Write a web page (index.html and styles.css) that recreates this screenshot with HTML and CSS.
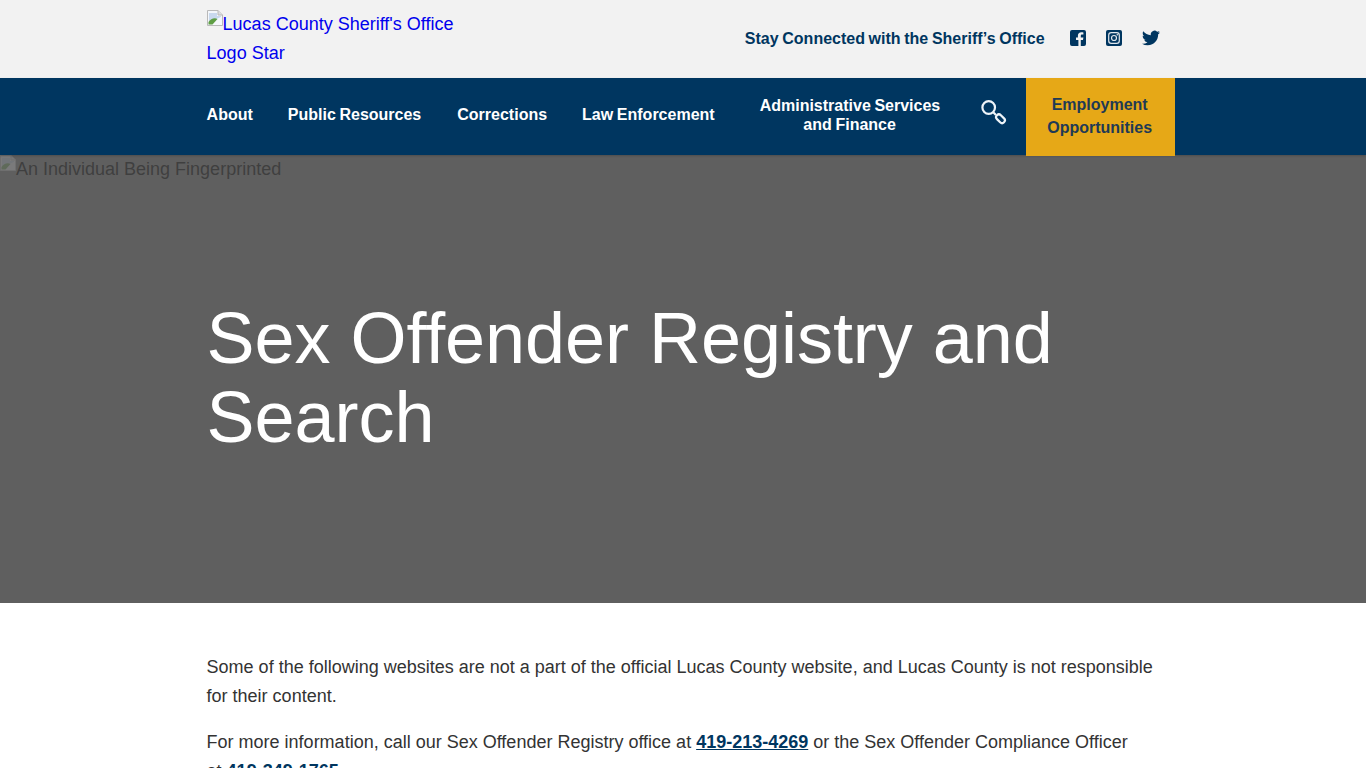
FILE: index.html
```html
<!DOCTYPE html>
<html lang="en">
<head>
<meta charset="utf-8">
<title>Sex Offender Registry and Search</title>
<link rel="stylesheet" href="styles.css">
</head>
<body>
<header class="topbar">
  <div class="wrap topbar-inner">
    <a class="logo" href="#">
      <svg class="broken" viewBox="0 0 16 16" width="16" height="16"><path d="M.5.5h10.500l4.500 4.500v10.500H.5z" fill="#f4f7fb" stroke="#b9b9b9"/><path d="M11 .5v4.500h4.500" fill="#dedede" stroke="#b9b9b9"/><path d="M2 3h8v3h4v1L2 12z" fill="#c9d9ee"/><path d="M1.500 14.500V12c2-3 6-5 9-3l-5 5.500z" fill="#5f9e45"/><path d="M6 15l8-8v8z" fill="#f4f7fb"/></svg>Lucas County Sheriff's Office Logo Star
    </a>
    <div class="social">
      <span class="social-label">Stay Connected with the Sheriff’s Office</span>
      <a class="social-icon" href="#" aria-label="Facebook"><svg viewBox="0 0 16 16" width="16" height="16"><path fill="#003660" d="M2 0h12a2 2 0 0 1 2 2v12a2 2 0 0 1-2 2h-3.200v-6h2.200l.4-2.600h-2.600V5.900c0-.8.4-1.300 1.400-1.300h1.200V2.400c-.7-.1-1.400-.2-2-.2-2.200 0-3.500 1.300-3.500 3.500v1.700H6v2.600h2.400v6H2a2 2 0 0 1-2-2V2a2 2 0 0 1 2-2z"/></svg></a>
      <a class="social-icon" href="#" aria-label="Instagram"><svg viewBox="0 0 16 16" width="16" height="16"><rect width="16" height="16" rx="2" fill="#003660"/><rect x="2.700" y="2.700" width="10.600" height="10.600" rx="2.600" fill="none" stroke="#dfe6ec" stroke-width="1.200"/><circle cx="8" cy="8" r="2.500" fill="none" stroke="#dfe6ec" stroke-width="1.200"/><circle cx="11.300" cy="4.700" r=".8" fill="#dfe6ec"/></svg></a>
      <a class="social-icon" href="#" aria-label="Twitter"><svg viewBox="0 0 24 24" width="18" height="18"><path fill="#003660" d="M23.950 4.570a10 10 0 0 1-2.820.77 4.960 4.960 0 0 0 2.160-2.720c-.95.550-2 .96-3.130 1.190a4.920 4.920 0 0 0-8.380 4.480C7.690 8.100 4.070 6.130 1.640 3.160a4.820 4.820 0 0 0-.67 2.480c0 1.710.87 3.210 2.190 4.090a4.900 4.900 0 0 1-2.230-.62v.06a4.920 4.920 0 0 0 3.950 4.830 5 5 0 0 1-2.210.08 4.940 4.940 0 0 0 4.600 3.420A9.870 9.870 0 0 1 0 19.540a13.940 13.940 0 0 0 7.550 2.210c9.050 0 14-7.500 14-13.980 0-.21 0-.42-.02-.63a9.940 9.940 0 0 0 2.460-2.550z"/></svg></a>
    </div>
  </div>
</header>
<nav class="mainnav">
  <div class="wrap nav-inner">
    <a class="nav-link nav-about" href="#">About</a>
    <a class="nav-link nav-public" href="#">Public Resources</a>
    <a class="nav-link nav-corr" href="#">Corrections</a>
    <a class="nav-link nav-law" href="#">Law Enforcement</a>
    <a class="nav-link nav-admin" href="#">Administrative Services<br>and Finance</a>
    <a class="nav-search" href="#" aria-label="Search"><svg viewBox="0 0 26 26" width="26" height="26"><circle cx="7.700" cy="8.500" r="6.300" fill="none" stroke="#eef4f9" stroke-width="2.200"/><path d="M12 13l3 3" stroke="#eef4f9" stroke-width="2.200"/><rect x="14.500" y="17" width="10" height="5.500" rx="2.750" transform="rotate(45 19.500 19.750)" fill="none" stroke="#eef4f9" stroke-width="2.200"/></svg></a>
    <a class="nav-cta" href="#">Employment Opportunities</a>
  </div>
</nav>
<section class="hero">
  <div class="hero-alt"><svg class="broken broken-dim" viewBox="0 0 16 16" width="16" height="16"><path d="M.5.5h10.500l4.500 4.500v10.500H.5z" fill="#f4f7fb" stroke="#b9b9b9"/><path d="M11 .5v4.500h4.500" fill="#dedede" stroke="#b9b9b9"/><path d="M2 3h8v3h4v1L2 12z" fill="#c9d9ee"/><path d="M1.500 14.500V12c2-3 6-5 9-3l-5 5.500z" fill="#5f9e45"/><path d="M6 15l8-8v8z" fill="#f4f7fb"/></svg>An Individual Being Fingerprinted</div>
  <div class="wrap"><h1 class="hero-title">Sex Offender Registry and Search</h1></div>
</section>
<main class="content wrap">
  <p>Some of the following websites are not a part of the official Lucas County website, and Lucas County is not responsible for their content.</p>
  <p>For more information, call our Sex Offender Registry office at <a href="#">419-213-4269</a> or the Sex Offender Compliance Officer at&nbsp;<a href="#">419-349-1765</a>.</p>
</main>
</body>
</html>
```
FILE: styles.css
```css
* { box-sizing: border-box; }
html, body { margin: 0; padding: 0; overflow: hidden; height: 768px; }
body { font-family: "Liberation Sans", Arial, sans-serif; font-size: 18px; line-height: 29px; color: #333; background: #fff; }
.wrap { width: 953px; margin-left: 206.6px; }
.broken { display: inline-block; vertical-align: 4px; }
.broken-dim { opacity: .18; }
.topbar { height: 78px; background: #f2f2f2; }
.topbar-inner { display: flex; align-items: flex-start; justify-content: space-between; height: 78px; }
.logo { display: block; width: 260px; padding-top: 10px; color: #0000ee; text-decoration: none; }
.social { display: flex; align-items: center; height: 76px; }
.social-label { font-size: 16px; font-weight: 700; color: #003660; margin-right: 25px; word-spacing: -.8px; }
.social-icon { display: flex; margin-right: 20px; }
.social-icon:last-child { margin-right: 0; }
.mainnav { height: 77px; background: #003660; position: relative; z-index: 1; box-shadow: 0 1px 2px rgba(0,0,0,.2); }
.nav-inner { display: flex; align-items: center; height: 77px; width: 968.4px; }
.nav-link { color: #fff; font-size: 16px; font-weight: 700; line-height: 19px; text-decoration: none; text-align: center; white-space: nowrap; word-spacing: -.8px; margin-top: -4px; }
.nav-about { margin-right: 35px; }
.nav-public { margin-right: 36px; }
.nav-corr { margin-right: 35px; }
.nav-law { margin-right: 45px; }
.nav-admin { width: 180px; margin-right: 41px; }
.nav-search { display: flex; margin-right: 19px; margin-top: -9px; }
.nav-cta { width: 149px; height: 78px; flex: none; background: #e6a817; color: #1f3a55; font-size: 16px; font-weight: 700; line-height: 23px; text-align: center; text-decoration: none; display: flex; align-items: center; padding: 0 15px 2px 14px; position: relative; }
.hero { height: 448px; background: #5f5f5f; position: relative; }
.hero-alt { color: #3f3f3f; position: absolute; left: 0; top: 0; white-space: nowrap; }
.hero-title { margin: 0; padding-top: 144px; font-size: 72px; line-height: 79px; font-weight: 400; color: #fff; letter-spacing: -.04px; }
.content { padding-top: 50px; }
.content p { margin: 0 0 17px; }
.content a { color: #003660; font-weight: 700; }
```
